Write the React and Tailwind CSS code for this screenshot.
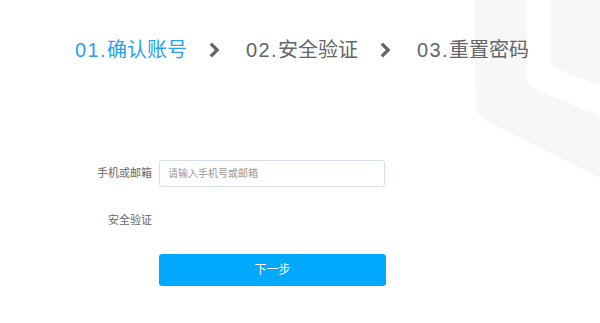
import React from 'react'

// ─── Step header ────────────────────────────────────────────────────────────

const STEPS = [
  { no: '01.', label: '确认账号' },
  { no: '02.', label: '安全验证' },
  { no: '03.', label: '重置密码' },
]

function Chevron() {
  return (
    <svg width="10" height="16" viewBox="0 0 10 16" className="shrink-0">
      <path d="M1.8 1.6 L8.2 8 L1.8 14.4" fill="none" stroke="#61666c" strokeWidth="3.3" strokeLinejoin="miter" />
    </svg>
  )
}

function Backdrop() {
  // faint hexagon outline at the top-right corner
  return (
    <svg
      className="absolute top-0 right-0 pointer-events-none"
      width="130"
      height="190"
      viewBox="470 0 130 190"
    >
      <path d="M474 0 L476 106 Q477 117 488 122 L600 178 L600 0 Z" fill="#f7f7f8" />
      <path d="M527 0 L527 78 Q528 86 537 90 L600 116 L600 0 Z" fill="#ffffff" />
      <path d="M551 0 L551 61 Q552 67 560 70 L600 86 L600 0 Z" fill="#f7f7f8" />
    </svg>
  )
}

export default function App() {
  return (
    <div
      className="relative h-[323px] w-[600px] overflow-hidden bg-white"
      style={{ fontFamily: '"Liberation Sans", "Noto Sans CJK SC", sans-serif' }}
    >
      <Backdrop />

      <div className="relative">
        {/* Steps */}
        <div className="flex items-center pt-[36px] pl-[75px] text-[20px] leading-[28px]">
          {STEPS.map((s, i) => (
            <div key={s.no} className="flex items-center">
              {i > 0 && (
                <div className="ml-[22px] mr-[27px] flex items-center">
                  <Chevron />
                </div>
              )}
              <span className={i === 0 ? 'text-[#27a2f0]' : 'text-[#636569]'}>
                <span className="tracking-[1.4px]">{s.no}</span>
                {s.label}
              </span>
            </div>
          ))}
        </div>

        {/* Form */}
        <div className="mt-[96px] ml-[62px] space-y-[20px]">
          <div className="flex items-center">
            <label className="w-[97px] pr-[7px] text-right text-[11px] text-[#666]">手机或邮箱</label>
            <input
              placeholder="请输入手机号或邮箱"
              className="h-[27px] w-[226px] rounded-[3px] border border-[#d5dde6] px-[8px] text-[10px] text-[#333] outline-none placeholder:text-[#999]"
            />
          </div>
          <div className="flex h-[27px] items-center">
            <label className="w-[97px] pr-[7px] text-right text-[11px] text-[#666]">安全验证</label>
          </div>
          <div className="flex">
            <div className="w-[97px]" />
            <button className="h-[32px] w-[227px] rounded-[3px] bg-[#00a9fb] text-[12px] text-white">
              下一步
            </button>
          </div>
        </div>
      </div>
    </div>
  )
}
